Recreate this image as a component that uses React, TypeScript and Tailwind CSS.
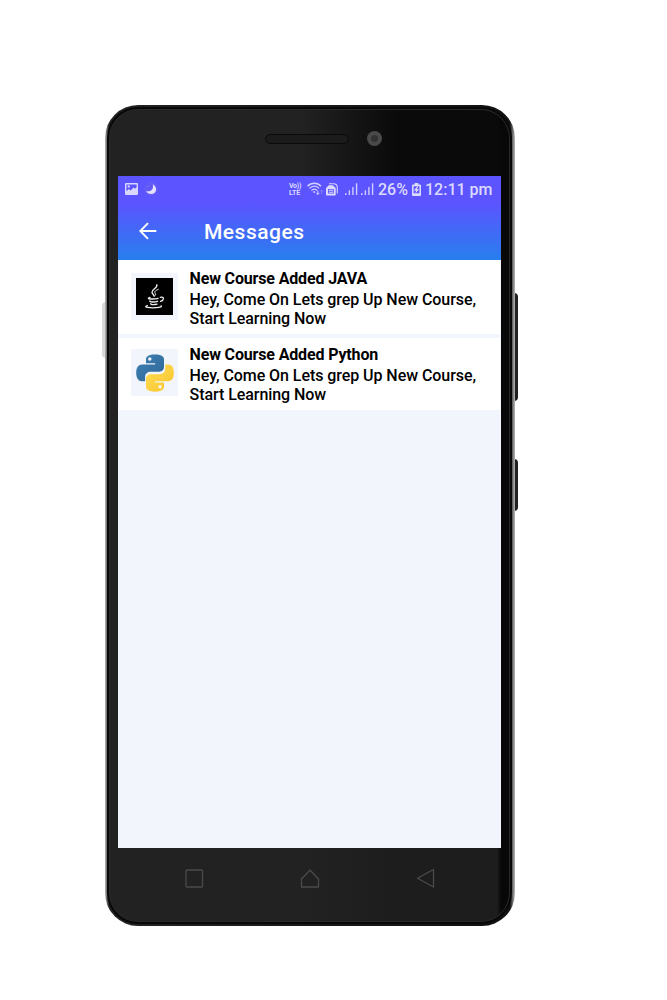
import React from "react";

function PictureIcon() {
  return (
    <svg width="13" height="12" viewBox="0 0 13 12" className="block">
      <path
        fillRule="evenodd"
        d="M1 0H12Q13 0 13 1V11Q13 12 12 12H1Q0 12 0 11V1Q0 0 1 0ZM1.4 1.4V8.2L3.8 6L5.6 7.4L8.6 4.6L10 5.8L11.6 4.2V1.4ZM3.7 2.2A1.2 1.2 0 1 1 3.7 4.6A1.2 1.2 0 1 1 3.7 2.2Z"
        fill="#d9d7ff"
      />
    </svg>
  );
}

function MoonIcon() {
  return (
    <svg width="14" height="14" viewBox="0 0 14 14" className="block">
      <circle cx="7" cy="7" r="6.3" fill="#6259f4" stroke="#7067f6" strokeWidth="0.6" />
      <path d="M8.8 2.2C14 5 12.8 12 7.2 12.1C4.8 12.1 3 10.8 2.2 9C6.5 10.4 10 7.3 8.8 2.2Z" fill="#e3e1ff" />
      <circle cx="4.2" cy="4.2" r="0.5" fill="#9f99ff" />
    </svg>
  );
}

function WifiIcon() {
  return (
    <svg width="17" height="14" viewBox="0 0 17 14" className="block" fill="none" stroke="#d3d0ff" strokeWidth="1.35">
      <path d="M0.5 4.3C4.3 0.2 10.3 0.2 14 4.3" />
      <path d="M2.5 6.4C5.4 3.3 9.2 3.3 12 6.4" />
      <path d="M4.5 8.5C6.3 6.6 8.3 6.6 10 8.5" />
      <circle cx="7.2" cy="10" r="0.9" fill="#d3d0ff" stroke="none" />
      <path d="M10.8 8.6V12.3M9.2 10.8L10.8 12.6L12.4 10.8" strokeWidth="1" />
      <path d="M14.7 12V8.2M13.4 9.5L14.7 8L16 9.5" stroke="#8d87ff" strokeWidth="0.8" />
    </svg>
  );
}

function SimIcon() {
  return (
    <svg width="12" height="13" viewBox="0 0 12 13" className="block">
      <path d="M3 0.7H8.3Q11.3 1.4 11.3 4V10.5" fill="none" stroke="#d3d0ff" strokeWidth="1.1" />
      <path
        fillRule="evenodd"
        d="M2.8 2.3H6.8L9.7 5V11.4Q9.7 12.6 8.5 12.6H1.2Q0 12.6 0 11.4V5ZM2 6V10.5H7.8V6ZM2.8 6.8H7V7.7H2.8ZM2.8 8.8H7V9.7H2.8Z"
        fill="#dcd9ff"
      />
    </svg>
  );
}

function SignalIcon() {
  return (
    <svg width="13" height="12" viewBox="0 0 13 12" className="block" fill="#cfccff">
      <path d="M0 10.2H1.5V12H0ZM3.7 7.2H5.1V12H3.7ZM7.2 4H8.6V12H7.2ZM10.9 0.3H12.3V12H10.9Z" />
    </svg>
  );
}

function BatteryIcon() {
  return (
    <svg width="9" height="13" viewBox="0 0 9 13" className="block">
      <path
        fillRule="evenodd"
        d="M2.6 0H6.4V1.5H8Q9 1.5 9 2.5V12Q9 13 8 13H1Q0 13 0 12V2.5Q0 1.5 1 1.5H2.6ZM1.6 3.3V10.3H7.4V3.3Z"
        fill="#dcd9ff"
      />
      <path d="M5.2 3.2L1.9 7.4H4L3.5 10.6L7.1 6.2H5L6.2 3.2Z" fill="#dcd9ff" />
    </svg>
  );
}

function JavaLogo() {
  return (
    <div className="h-[37px] w-[37px] bg-black">
      <svg width="37" height="37" viewBox="0 0 37 37" fill="none" stroke="#eeeeee" strokeLinecap="round">
        <path d="M20.8 6.8C22 10.2 15.4 11.2 16 14.4C16.2 16 17.9 16.6 18 18" strokeWidth="1.4" />
        <path d="M22.3 11.3C18.2 13 18.3 14.1 19.4 15.6C20 16.5 19.4 17.4 18.7 18" strokeWidth="1" />
        <path d="M14 19.4C11 20.4 12.5 21 16.5 21C19.5 21 21 20.7 22 20.3" strokeWidth="1.3" />
        <path d="M13.9 23C13.4 24.1 18.4 24.3 21.5 23.3" strokeWidth="1.4" />
        <path d="M14.8 25.7C14.5 26.8 18.4 26.9 21 26.1" strokeWidth="1.4" />
        <path d="M24.3 19.4C28.8 18.2 28.2 22 24.6 23.4" strokeWidth="1.3" />
        <path d="M11.5 27.7C6 29.2 14.5 30.2 20.2 29.7C24.3 29.3 26.3 28.6 25 27.9" strokeWidth="1.2" />
      </svg>
    </div>
  );
}

function PythonLogo() {
  return (
    <svg width="38" height="38" viewBox="0 0 38 38" className="block">
      <defs>
        <linearGradient id="pyBlue" x1="0" y1="0" x2="1" y2="1">
          <stop stopColor="#3c80b4" />
          <stop offset="1" stopColor="#316896" />
        </linearGradient>
        <linearGradient id="pyGold" x1="0" y1="0" x2="1" y2="1">
          <stop stopColor="#ffdd54" />
          <stop offset="1" stopColor="#f9c52e" />
        </linearGradient>
      </defs>
      <path
        fillRule="evenodd"
        d="M18.8 0.4C11.3 0.4 10 3.2 10 5.1V9.2H19.1V10.6H6.2C2.4 10.6 0.2 13.6 0.2 19C0.2 24.2 2.7 27.2 5.7 27.2H9.1V22.7C9.1 19.7 11.7 17.7 14.5 17.7H23.3C26 17.7 28 15.6 28 13V5.1C28 2.2 24.9 0.4 18.8 0.4ZM13.8 3.3A1.7 1.7 0 1 1 13.8 6.7A1.7 1.7 0 1 1 13.8 3.3Z"
        fill="url(#pyBlue)"
      />
      <path
        fillRule="evenodd"
        d="M29.2 10.6V15C29.2 18.3 26.4 20.2 23.6 20.2H14.7C12.2 20.2 10 22.3 10 24.9V33C10 35.8 13.7 37.7 18.9 37.7C24.7 37.7 28 35.5 28 32.7V28.5H19V27.2H32.1C36 27.2 37.8 24 37.8 19C37.8 13.4 35.8 10.6 32.5 10.6ZM24.1 31.1A1.7 1.7 0 1 1 24.1 34.5A1.7 1.7 0 1 1 24.1 31.1Z"
        fill="url(#pyGold)"
      />
    </svg>
  );
}

function StatusBar() {
  return (
    <div className="flex h-[26px] items-center pr-[8px] pl-[7px] text-[#dcd9ff]">
      <PictureIcon />
      <div className="ml-[6px]">
        <MoonIcon />
      </div>
      <div className="ml-auto flex items-center">
        <div className="w-[14px] text-[7px] font-bold whitespace-nowrap">
          <div className="h-[6px] leading-[6px] tracking-[-0.3px]">Vo))</div>
          <div className="h-[7px] leading-[8px]">LTE</div>
        </div>
        <div className="ml-[4px]">
          <WifiIcon />
        </div>
        <div className="ml-[2px]">
          <SimIcon />
        </div>
        <div className="ml-[7px]">
          <SignalIcon />
        </div>
        <div className="ml-[3px]">
          <SignalIcon />
        </div>
        <span className="ml-[4px] w-[31px] pt-[1px] text-[16px] leading-[28px] font-medium whitespace-nowrap">26%</span>
        <div className="ml-[3px]">
          <BatteryIcon />
        </div>
        <span className="ml-[4px] w-[68px] pt-[1px] text-[16px] leading-[28px] font-medium whitespace-nowrap">12:11 pm</span>
      </div>
    </div>
  );
}

function Message({ title, logo }: { title: string; logo: React.ReactNode }) {
  return (
    <div className="flex h-[72px] bg-white pl-[12px] first:h-[74px] first:pt-[2px]">
      <div className="mt-[11px] flex h-[47px] w-[47px] shrink-0 items-center justify-center bg-[#f2f5fb]">{logo}</div>
      <div className="ml-[11.5px] pt-[6px] whitespace-nowrap text-black">
        <div className="text-[16px] leading-[21px] font-bold tracking-[-0.15px]">{title}</div>
        <div className="pt-[2px] text-[16px] leading-[18.5px] font-medium tracking-[-0.06px]">
          Hey, Come On Lets grep Up New Course,
          <br />
          Start Learning Now
        </div>
      </div>
    </div>
  );
}

function Screen() {
  return (
    <div className="h-[672px] w-[383px] overflow-hidden bg-[#f2f5fb]">
      <header className="h-[84px] bg-[linear-gradient(180deg,#5b54ff_0%,#5b54ff_32%,#287fee_100%)]">
        <StatusBar />
        <div className="flex h-[58px] items-center pl-[21px] text-white">
          <svg width="18" height="18" viewBox="0 0 18 18" fill="none" stroke="white" strokeWidth="1.9">
            <path d="M17.3 9H1.5M9 1.2L1.3 9L9 16.8" />
          </svg>
          <h1 className="ml-[47px] pt-[1px] text-[21px] leading-[26px] font-medium tracking-[0.5px]">Messages</h1>
        </div>
      </header>
      <main className="flex flex-col gap-[4px] pr-[1px] pl-[1px]">
        <Message title="New Course Added JAVA" logo={<JavaLogo />} />
        <Message title="New Course Added Python" logo={<PythonLogo />} />
      </main>
    </div>
  );
}

export default function App() {
  return (
    <div className="h-[1000px] w-[667px] overflow-hidden bg-white pt-[105px] pl-[105px] font-['Roboto',sans-serif]">
      <div className="relative h-[821px] w-[410px]">
        <div className="absolute top-[197px] -left-[3px] h-[56px] w-[5px] rounded-l-sm bg-[#d9d9d9]" />
        <div className="absolute top-[188px] -right-[3px] h-[108px] w-[5px] rounded-r-sm border-l-2 border-[#aaa] bg-[#202020]" />
        <div className="absolute top-[354px] -right-[3px] h-[52px] w-[5px] rounded-r-sm border-l-2 border-[#aaa] bg-[#202020]" />
        <div className="relative h-full rounded-[33px] bg-[linear-gradient(90deg,#bbb_0,#666_2px,#222_4px,#111_405px,#555_407px,#bbb_410px)] pt-[2px] pr-[3px] pb-[2px] pl-[2px]">
          <div className="h-full rounded-[31px] bg-[#080808] p-[2px]">
            <div className="flex h-full flex-col items-center rounded-[29px] border border-[#292929] bg-[linear-gradient(90deg,transparent_97%,#080808_98%),linear-gradient(90deg,#222_0%,#222_48%,transparent_72%),linear-gradient(180deg,#0a0a0a_0%,#0a0a0a_60%,#1d1d1d_91%)]">
              <div className="flex h-[66px] w-full shrink-0 items-start pt-[21px] pl-[155px]">
                <div className="mt-[3px] h-[10px] w-[84px] rounded-full border border-[#090909] bg-[#2a2a2a] bg-[radial-gradient(#090909_0.6px,transparent_0.8px)] bg-[size:2px_2px]" />
                <div className="ml-[18px] flex h-[15px] w-[15px] items-center justify-center rounded-full bg-[#4a4a4a]">
                  <div className="h-[7px] w-[7px] rounded-full bg-[#333]" />
                </div>
              </div>
              <Screen />
              <svg width="250" height="22" viewBox="0 0 250 22" className="mt-[20px] shrink-0" fill="none" stroke="#4b4b4b" strokeWidth="1.3" strokeLinejoin="round">
                <rect x="1" y="2" width="16.5" height="17" rx="1" />
                <path d="M116.5 19H133.5V11L125 2L116.5 11Z" />
                <path d="M248.5 1.5V19L232.5 10.2Z" />
              </svg>
            </div>
          </div>
        </div>
      </div>
    </div>
  );
}
